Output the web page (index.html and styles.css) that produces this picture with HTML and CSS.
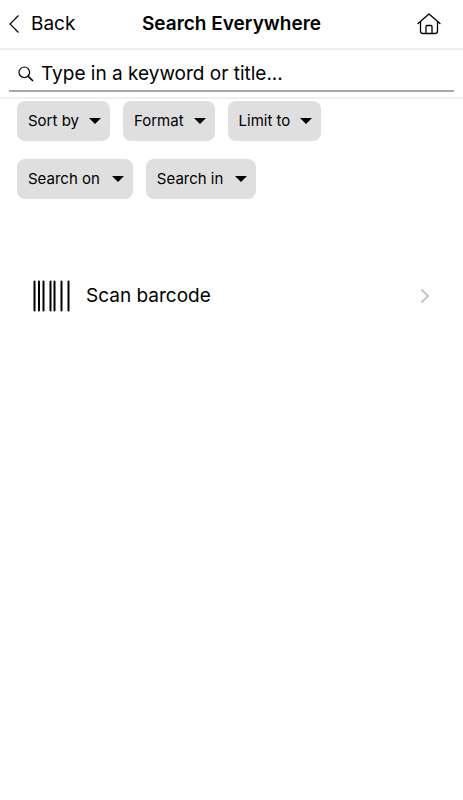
FILE: index.html
```
<!DOCTYPE html>
<html lang="en">
<head>
<meta charset="utf-8">
<meta name="viewport" content="width=device-width, initial-scale=1">
<title>Search Everywhere</title>
<link rel="stylesheet" href="styles.css">
</head>
<body>
<header class="bar">
  <a class="back" href="#">
    <svg width="11" height="18" viewBox="0 0 11 18" aria-hidden="true"><path d="M9.500 .5 1 9l8.500 8.500" fill="none" stroke="currentColor" stroke-width="1.200"/></svg>
    <span>Back</span>
  </a>
  <h1 class="title">Search Everywhere</h1>
  <a class="home" href="#" aria-label="Home">
    <svg width="24" height="22" viewBox="0 0 24 22" fill="none" stroke="currentColor" stroke-width="1.300" stroke-linecap="round" stroke-linejoin="round" aria-hidden="true"><path d="M1 10.500 12 1l11 9.500M3.500 8.500v9.500a2.500 2.500 0 0 0 2.500 2.500h12a2.500 2.500 0 0 0 2.500-2.500V8.500M9 20.500v-7a1 1 0 0 1 1-1h4a1 1 0 0 1 1 1v7"/></svg>
  </a>
</header>
<form class="search">
  <label class="field">
    <svg width="16" height="16" viewBox="0 0 16 16" fill="none" stroke="currentColor" aria-hidden="true"><circle cx="6.300" cy="6.300" r="5.300" stroke-width="1.200"/><path d="m10.300 10.300 4.700 4.700" stroke-width="1.700"/></svg>
    <input class="input" type="text" aria-label="Keyword or title" placeholder="Type in a keyword or title...">
  </label>
</form>
<main>
  <div class="filters filters-compact">
    <button class="chip" type="button">Sort by<span class="caret"></span></button>
    <button class="chip" type="button">Format<span class="caret"></span></button>
    <button class="chip" type="button">Limit to<span class="caret"></span></button>
  </div>
  <div class="filters">
    <button class="chip" type="button">Search on<span class="caret"></span></button>
    <button class="chip" type="button">Search in<span class="caret"></span></button>
  </div>
  <a class="scan" href="#">
    <svg width="38" height="32" viewBox="0 0 38 32" stroke="currentColor" stroke-width="2" stroke-linecap="round" aria-hidden="true"><path d="M2.500 1.500v29M7 1.500v29M11.500 1.500v29M18.500 1.500v29M22.500 1.500v29M29.500 1.500v29M36.500 1.500v29"/></svg>
    <span class="scan-label">Scan barcode</span>
    <svg width="10" height="16" viewBox="0 0 10 16" fill="none" stroke="#c4c4c8" stroke-width="2" aria-hidden="true"><path d="m1.500 1.500 6.500 6.500-6.500 6.500"/></svg>
  </a>
</main>
</body>
</html>
```
FILE: styles.css
```
* {
  box-sizing: border-box;
}

body {
  margin: 0;
  background: #fff;
  color: #000;
  font-family: Inter, "Liberation Sans", sans-serif;
  font-size: 19px;
  line-height: 24px;
}

a {
  color: inherit;
  text-decoration: none;
}

svg {
  display: block;
  flex: none;
}

.bar {
  display: grid;
  grid-template-columns: 1fr auto 1fr;
  align-items: center;
  height: 50px;
  padding: 0 9px;
  border-bottom: 2px solid #efefef;
}

.back {
  display: flex;
  align-items: center;
  gap: 11px;
}

.title {
  margin: 0;
  font-size: 19px;
  font-weight: 600;
}

.home {
  justify-self: end;
  padding-right: 13px;
}

.search {
  padding: 8px 9px 5px;
  border-bottom: 2px solid #efefef;
}

.field {
  display: flex;
  align-items: center;
  gap: 7px;
  height: 34px;
  padding-left: 9px;
  border-bottom: 2px solid #a8a8a8;
}

.input {
  flex: 1;
  min-width: 0;
  padding: 0;
  border: 0;
  outline: 0;
  background: none;
  color: inherit;
  font: inherit;
}

.input::placeholder {
  color: #000;
  opacity: 1;
}

.filters {
  display: flex;
  flex-wrap: wrap;
  gap: 13px;
  margin-bottom: 16px;
  padding: 2px 17px 0;
}

.chip {
  display: flex;
  align-items: center;
  gap: 12px;
  height: 40px;
  padding: 0 9px 0 11px;
  border: 0;
  border-radius: 8px;
  background: #dfdfdf;
  color: inherit;
  font: inherit;
  font-size: 15px;
}

.filters-compact .chip {
  gap: 10px;
}

.caret {
  border: solid transparent;
  border-width: 6px 6px 0;
  border-top-color: #000;
}

.scan {
  display: flex;
  align-items: center;
  gap: 16px;
  margin-top: 65px;
  padding: 16px 33px 16px 32px;
}

.scan-label {
  flex: 1;
}
```
